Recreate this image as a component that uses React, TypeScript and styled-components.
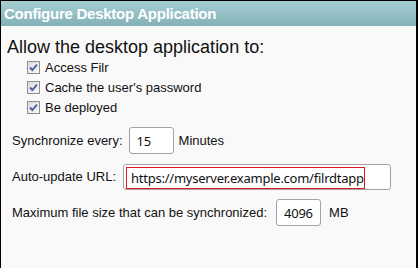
import React from "react";
import styled, { createGlobalStyle } from "styled-components";

/** Global page reset */
const GlobalStyle = createGlobalStyle`
  html, body {
    margin: 0;
    padding: 0;
    background: #ffffff;
  }
  body {
    font-family: "Liberation Sans", Arial, sans-serif;
  }
`;

/** Types */
type CheckRowProps = {
  /** Text shown beside the check box. */
  label: string;
};

type FieldRowProps = {
  /** Caption in front of the field. */
  label: string;
  /** Value shown in the field. */
  value: string;
  /** Width of the field box. */
  width: number;
  /** Unit shown after the field, if any. */
  unit?: string;
  /** Space between the caption and the field. */
  gap?: number;
};

/** Little grey check box with a blue tick, like the old Windows look. */
const CheckRow = ({ label }: CheckRowProps) => (
  <Row>
    <Box>
      <svg width="9" height="9" viewBox="0 0 9 9">
        <path
          d="M1 4.5 L3.4 7 L8 1.6"
          fill="none"
          stroke="#4b63a1"
          strokeWidth="1.9"
        />
      </svg>
    </Box>
    <CheckLabel>{label}</CheckLabel>
  </Row>
);

const FieldRow = ({ label, value, width, unit, gap = 6 }: FieldRowProps) => (
  <Line $gap={gap}>
    <Caption>{label}</Caption>
    <Field type="text" defaultValue={value} $width={width} readOnly />
    {unit && <Unit>{unit}</Unit>}
  </Line>
);

const App = () => {
  return (
    <>
      <GlobalStyle />
      <Frame>
        <Header>Configure Desktop Application</Header>
        <Body>
          <Title>Allow the desktop application to:</Title>
          <CheckList>
            <CheckRow label="Access Filr" />
            <CheckRow label="Cache the user's password" />
            <CheckRow label="Be deployed" />
          </CheckList>
          <Form>
            <FieldRow label="Synchronize every:" value="15" width={45} unit="Minutes" />
            <Line $gap={7}>
              <Caption>Auto-update URL:</Caption>
              <UrlBox>
                <UrlInput type="text" defaultValue="https://myserver.example.com/filrdtapp" readOnly />
              </UrlBox>
            </Line>
            <FieldRow
              label="Maximum file size that can be synchronized:"
              value="4096"
              width={45}
              unit="MB"
              gap={9}
            />
          </Form>
        </Body>
      </Frame>
    </>
  );
};

/** Styles */
const Frame = styled.div`
  box-sizing: border-box;
  width: 418px;
  height: 268px;
  border-top: 1px solid #000;
  border-left: 1px solid #000;
  border-right: 2px solid #000;
  background: #f9f9f9;
  overflow: hidden;
`;

const Header = styled.div`
  height: 25px;
  line-height: 25px;
  padding-left: 3px;
  background: linear-gradient(#a6ced2, #83b1b8);
  color: #ffffff;
  font-weight: bold;
  font-size: 15px;
  letter-spacing: -0.25px;
`;

const Body = styled.div`
  display: flex;
  flex-direction: column;
  padding: 12px 0 0 6px;
`;

const Title = styled.div`
  font-size: 18px;
  line-height: 19px;
  color: #111;
`;

const CheckList = styled.div`
  display: flex;
  flex-direction: column;
  padding-left: 20px;
`;

const Row = styled.div`
  display: flex;
  align-items: center;
  height: 20px;
`;

const Box = styled.span`
  box-sizing: border-box;
  width: 13px;
  height: 13px;
  border: 1px solid #8e8f8f;
  background: linear-gradient(135deg, #dcdcdc, #f8f8f8);
  display: flex;
  align-items: center;
  justify-content: center;
`;

const CheckLabel = styled.span`
  margin-left: 5px;
  font-size: 13px;
  color: #111;
`;

const Form = styled.div`
  display: flex;
  flex-direction: column;
  gap: 9px;
  padding: 10px 0 0 5px;
`;

const Line = styled.div<{ $gap: number }>`
  display: flex;
  align-items: center;
  gap: ${(p) => p.$gap}px;
  height: 27px;
`;

const Caption = styled.span`
  font-size: 13px;
  color: #111;
`;

const Unit = styled(Caption)`
  margin-left: -1px;
`;

const Field = styled.input<{ $width: number }>`
  box-sizing: border-box;
  width: ${(p) => p.$width}px;
  height: 27px;
  padding: 0 0 0 7px;
  border: 1px solid #a3a3a3;
  border-radius: 3px;
  background: #fff;
  font-family: "Noto Sans", "Open Sans", sans-serif;
  font-size: 13px;
  letter-spacing: -0.25px;
  color: #111;
  outline: none;
`;

const UrlBox = styled.div`
  box-sizing: border-box;
  width: 268px;
  height: 26px;
  padding: 2px;
  border: 1px solid #a3a3a3;
  border-radius: 3px;
  background: #fff;
  display: flex;
`;

const UrlInput = styled.input`
  box-sizing: border-box;
  width: 239px;
  height: 22px;
  padding: 0 0 0 4px;
  border: 1px solid #e0161f;
  border-radius: 0;
  background: #fff;
  font-family: "Noto Sans", "Open Sans", sans-serif;
  font-size: 13px;
  letter-spacing: -0.25px;
  color: #111;
  outline: none;
`;

/** Exports */
export default App;
